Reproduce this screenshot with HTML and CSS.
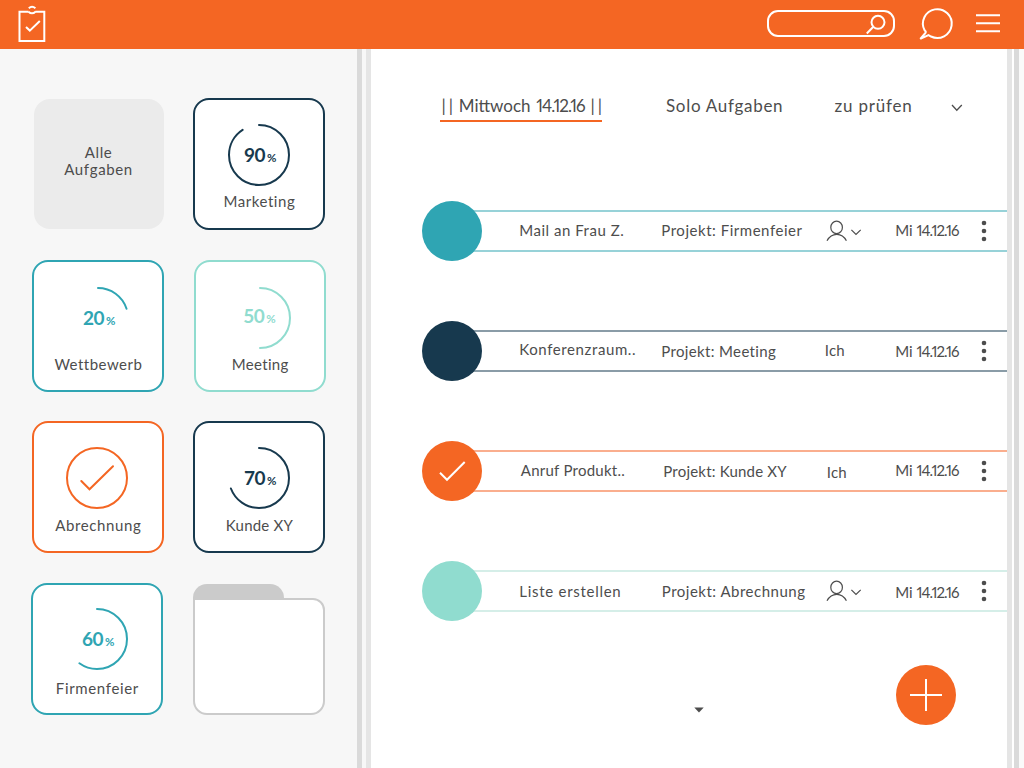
FILE: index.html
```html
<!DOCTYPE html>
<html lang="de">
<head>
<meta charset="utf-8">
<title>Aufgaben</title>
<link rel="stylesheet" href="styles.css">
</head>
<body>
<header class="topbar">
  <svg class="logo" width="30" height="38" viewBox="0 0 30 38">
    <path d="M11.5 6.7H2.5V36H27.3V6.7H18.3M11.8 3.3Q15 .3 18.4 3.3M11.5 6.7Q15 9.8 18.5 6.7M9 22L12.8 25.6L22.8 16"/>
  </svg>
  <div class="tools">
    <div class="search">
      <svg width="24" height="23" viewBox="0 0 24 23"><circle cx="15" cy="9.3" r="6.5"/><path d="M10.1 14L3.8 20.5"/></svg>
    </div>
    <svg class="bubble" width="36" height="34" viewBox="0 0 36 34"><path d="M13 29.5A14.4 14.4 0 1 0 6.6 23.3Q8.4 24.8 7.4 26L2.3 31.8L10.5 28.1Z"/></svg>
    <svg class="burger" width="26" height="20" viewBox="0 0 26 20"><path d="M1 2.2H25M1 10.2H25M1 18.2H25"/></svg>
  </div>
</header>
<div class="layout">
  <aside class="sidebar">
    <div class="card all"><span class="all-text">Alle<br>Aufgaben</span></div>
    <div class="card navy">
      <div class="ring"><svg viewBox="0 0 64 64"><circle cx="32" cy="32" r="30" pathLength="100" stroke-dasharray="90.8 100"/></svg><b>90<small>%</small></b></div>
      <span class="label l-marketing">Marketing</span>
    </div>
    <div class="card teal second">
      <div class="ring"><svg viewBox="0 0 64 64"><circle cx="32" cy="32" r="30" pathLength="100" stroke-dasharray="20 100"/></svg><b>20<small>%</small></b></div>
      <span class="label l-wettbewerb">Wettbewerb</span>
    </div>
    <div class="card mint second shifted">
      <div class="ring"><svg viewBox="0 0 64 64"><circle cx="32" cy="32" r="30" pathLength="100" stroke-dasharray="50 100"/></svg><b class="raised">50<small>%</small></b></div>
      <span class="label l-meeting">Meeting</span>
    </div>
    <div class="card orange lifted">
      <div class="ring done"><svg viewBox="0 0 64 64"><circle cx="32" cy="32" r="30"/><path d="M16.3 35L24.5 43.3L48 20.3"/></svg></div>
      <span class="label l-abrechnung">Abrechnung</span>
    </div>
    <div class="card navy lifted">
      <div class="ring"><svg viewBox="0 0 64 64"><circle cx="32" cy="32" r="30" pathLength="100" stroke-dasharray="69.3 100"/></svg><b>70<small>%</small></b></div>
      <span class="label l-kunde">Kunde XY</span>
    </div>
    <div class="card teal lifted outset">
      <div class="ring"><svg viewBox="0 0 64 64"><circle cx="32" cy="32" r="30" pathLength="100" stroke-dasharray="60 100"/></svg><b>60<small>%</small></b></div>
      <span class="label l-firmenfeier">Firmenfeier</span>
    </div>
    <div class="folder"><div class="folder-tab"></div><div class="folder-body"></div></div>
  </aside>
  <div class="divider"></div>
  <main class="main">
    <nav class="tabs">
      <span class="tab active"><span class="bars">||</span><span>Mittwoch</span><span class="num">14.12.16</span><span class="bars">||</span></span>
      <span class="tab solo">Solo Aufgaben</span>
      <span class="tab check">zu prüfen</span>
      <svg class="chev" width="12" height="8" viewBox="0 0 12 8"><path d="M1 1L5.8 6.2L10.8 1"/></svg>
    </nav>
    <section class="tasks">
      <div class="task teal">
        <div class="dot"></div>
        <div class="bar">
          <span class="t-mail">Mail an Frau Z.</span>
          <span class="t-firmenfeier">Projekt: Firmenfeier</span>
          <svg class="person" width="38" height="22" viewBox="0 0 38 22"><ellipse cx="11.6" cy="7.4" rx="5.8" ry="6.2"/><path d="M2 20.8Q5.5 14.4 11.8 14.4T21.4 20.8M26.4 9.9L31 14.5L35.7 9.9"/></svg>
          <span class="date">Mi <span class="num">14.12.16</span></span>
          <svg class="more" width="6" height="22" viewBox="0 0 6 22"><circle cx="3" cy="3" r="2.3"/><circle cx="3" cy="11" r="2.3"/><circle cx="3" cy="19" r="2.3"/></svg>
        </div>
      </div>
      <div class="task navy">
        <div class="dot"></div>
        <div class="bar">
          <span class="t-konferenz up">Konferenzraum..</span>
          <span class="t-meeting down">Projekt: Meeting</span>
          <span class="ich">Ich</span>
          <span class="date down">Mi <span class="num">14.12.16</span></span>
          <svg class="more" width="6" height="22" viewBox="0 0 6 22"><circle cx="3" cy="3" r="2.3"/><circle cx="3" cy="11" r="2.3"/><circle cx="3" cy="19" r="2.3"/></svg>
        </div>
      </div>
      <div class="task orange">
        <div class="dot"><svg width="28" height="22" viewBox="0 0 28 22"><path d="M2 12.7L9 19.8L26.7 2"/></svg></div>
        <div class="bar">
          <span class="t-anruf">Anruf Produkt..</span>
          <span class="t-kunde down">Projekt: Kunde XY</span>
          <span class="ich late lower">Ich</span>
          <span class="date">Mi <span class="num">14.12.16</span></span>
          <svg class="more" width="6" height="22" viewBox="0 0 6 22"><circle cx="3" cy="3" r="2.3"/><circle cx="3" cy="11" r="2.3"/><circle cx="3" cy="19" r="2.3"/></svg>
        </div>
      </div>
      <div class="task mint">
        <div class="dot"></div>
        <div class="bar">
          <span class="t-liste down">Liste erstellen</span>
          <span class="t-abrechnung down">Projekt: Abrechnung</span>
          <svg class="person" width="38" height="22" viewBox="0 0 38 22"><ellipse cx="11.6" cy="7.4" rx="5.8" ry="6.2"/><path d="M2 20.8Q5.5 14.4 11.8 14.4T21.4 20.8M26.4 9.9L31 14.5L35.7 9.9"/></svg>
          <span class="date lower">Mi <span class="num">14.12.16</span></span>
          <svg class="more" width="6" height="22" viewBox="0 0 6 22"><circle cx="3" cy="3" r="2.3"/><circle cx="3" cy="11" r="2.3"/><circle cx="3" cy="19" r="2.3"/></svg>
        </div>
      </div>
    </section>
    <footer class="foot">
      <svg class="caret" width="10" height="6" viewBox="0 0 10 6"><path d="M.3 .5H9.7L5 5.5Z"/></svg>
      <div class="add"><svg width="34" height="34" viewBox="0 0 34 34"><path d="M17 1V33M1 17H33"/></svg></div>
    </footer>
  </main>
  <div class="edge"></div>
</div>
</body>
</html>
```
FILE: styles.css
```css
* { box-sizing: border-box; }

body {
  margin: 0;
  width: 1024px;
  height: 768px;
  overflow: hidden;
  font-family: Lato, "Open Sans", sans-serif;
  font-size: 15px;
  color: #4d4d4d;
  background: #fff;
}

svg { display: block; fill: none; stroke: currentColor; stroke-width: 2; }

.navy { --c: #17394e; --line: #8a9ca7; }
.teal { --c: #2fa5b3; --line: #97d2d8; }
.mint { --c: #90dccf; --line: #d5eee8; }
.orange { --c: #f46623; --line: #faae8e; }

.topbar {
  display: flex;
  justify-content: space-between;
  align-items: flex-start;
  height: 49px;
  padding: 5px 23px 0 17px;
  background: #f46623;
  color: #fff;
}
.tools { display: flex; }
.search {
  display: flex;
  justify-content: flex-end;
  width: 128px;
  height: 27px;
  margin-top: 5px;
  padding: 1px 6px 0 0;
  border: 2px solid #fff;
  border-radius: 11px;
}
.bubble { margin: 2px 0 0 22.5px; }
.burger { margin: 8px 0 0 21.5px; }

.layout { display: flex; height: 719px; }

.sidebar {
  display: grid;
  grid-template-columns: 132px 132px;
  grid-auto-rows: 132px;
  gap: 30px 29px;
  width: 357px;
  padding: 49px 0 0 32.4px;
  background: #f7f7f7;
}
.card {
  display: flex;
  flex-direction: column;
  align-items: center;
  width: 132px;
  height: 132px;
  padding-top: 23px;
  border: 2px solid var(--c);
  border-radius: 16px;
  background: #fff;
}
.second { padding-top: 24px; }
.lifted { margin-top: -1px; }
.shifted { margin-left: .8px; }
.outset { margin-left: -1px; padding-top: 22px; }
.all {
  width: 130px;
  height: 130px;
  margin: .5px 1.2px;
  padding-top: 45px;
  border: 0;
  background: #ebebeb;
  text-align: center;
}
.all-text { line-height: 17px; letter-spacing: .65px; }

.ring { display: grid; width: 64px; height: 64px; color: var(--c); }
.done { margin-right: 2px; }
.ring svg, .ring b { grid-area: 1 / 1; }
.ring svg { stroke-linecap: round; }
.ring circle { transform: rotate(-90deg); transform-origin: 50% 50%; }
.ring b {
  align-self: center;
  justify-self: center;
  padding: 2px 0 0 1px;
  font-size: 19px;
  line-height: 24px;
  letter-spacing: -.6px;
}
.ring b.raised { padding: 0 2px 2px 0; }
.ring small { margin-left: 2px; font-size: 11.5px; }

.label { margin-top: 4px; line-height: 20px; white-space: nowrap; }
.lifted .label { margin-top: 5px; }
.outset .label { margin-top: 6.5px; }
.l-marketing { letter-spacing: .55px; }
.l-wettbewerb { letter-spacing: .5px; }
.l-meeting { letter-spacing: .35px; }
.l-abrechnung { letter-spacing: .6px; }
.l-kunde { letter-spacing: .2px; }
.l-firmenfeier { letter-spacing: .65px; }

.folder { height: 131px; }
.folder-tab { width: 91px; height: 14px; border-radius: 14px 14px 0 0; background: #cbcbcb; }
.folder-body {
  height: 117px;
  border: 2px solid #cbcbcb;
  border-radius: 0 12px 14px 14px;
  background: #fff;
}

.divider {
  width: 14px;
  background: linear-gradient(90deg, #dadada 5px, #f7f7f7 5px 9px, #e5e5e5 9px);
}
.edge {
  width: 17px;
  background: linear-gradient(90deg, #e5e5e5 5px, #fff 5px 7px, #dadada 7px 12px, #fafafa 12px);
}

.main { width: 636px; }
.tabs { display: flex; height: 74px; padding: 45px 0 0 69px; font-size: 17px; line-height: 23px; white-space: nowrap; }
.num { font-variant-numeric: proportional-nums; letter-spacing: -.95px; }
.active {
  display: flex;
  justify-content: space-between;
  width: 162px;
  height: 28px;
  padding-left: 1.5px;
  border-bottom: 2px solid #f46623;
}
.bars { letter-spacing: 3px; margin-right: -3px; }
.solo { width: 168px; margin-left: 64px; letter-spacing: .7px; }
.check { width: 117px; padding-left: .5px; letter-spacing: .8px; }
.chev { margin-top: 10px; stroke-width: 1.3; }

.tasks { display: grid; gap: 60px; padding: 78px 0 0 51.3px; }
.task { display: flex; align-items: center; height: 60px; }
.dot {
  z-index: 1;
  display: grid;
  place-items: center;
  width: 60px;
  height: 60px;
  border-radius: 50%;
  background: var(--c);
  color: #fff;
}
.bar {
  display: grid;
  grid-template-columns: 142px 163.5px 70.5px 85.3px 6px;
  align-items: center;
  flex: 1;
  height: 42px;
  margin-left: -30px;
  padding-left: 67px;
  border: solid var(--line);
  border-width: 2px 0;
  line-height: 20px;
  white-space: nowrap;
}
.bar > span { padding-bottom: 2px; }
.bar > .up { padding-bottom: 4px; }
.bar > .down { padding-bottom: 0; }
.bar > .lower { padding: 2px 0 0; }
.bar > .late { padding-left: 2px; }
.ich { letter-spacing: .2px; }
.t-mail { letter-spacing: .52px; }
.t-konferenz { letter-spacing: .6px; }
.t-anruf { letter-spacing: .25px; padding-left: 1.5px; }
.t-liste { letter-spacing: .72px; }
.t-firmenfeier { letter-spacing: .53px; }
.t-meeting { letter-spacing: .35px; }
.t-kunde { letter-spacing: .2px; padding-left: 2px; }
.t-abrechnung { letter-spacing: .5px; padding-left: .5px; }
.person { stroke-width: 1.2; }
.more { fill: #4d4d4d; stroke: none; }

.foot { display: flex; align-items: flex-start; padding: 44px 0 0 322.5px; }
.caret { margin-top: 42px; fill: #4d4d4d; stroke: none; }
.add {
  display: grid;
  place-items: center;
  width: 60px;
  height: 60px;
  margin-left: 192px;
  border-radius: 50%;
  background: #f46623;
  color: #fff;
}
```
